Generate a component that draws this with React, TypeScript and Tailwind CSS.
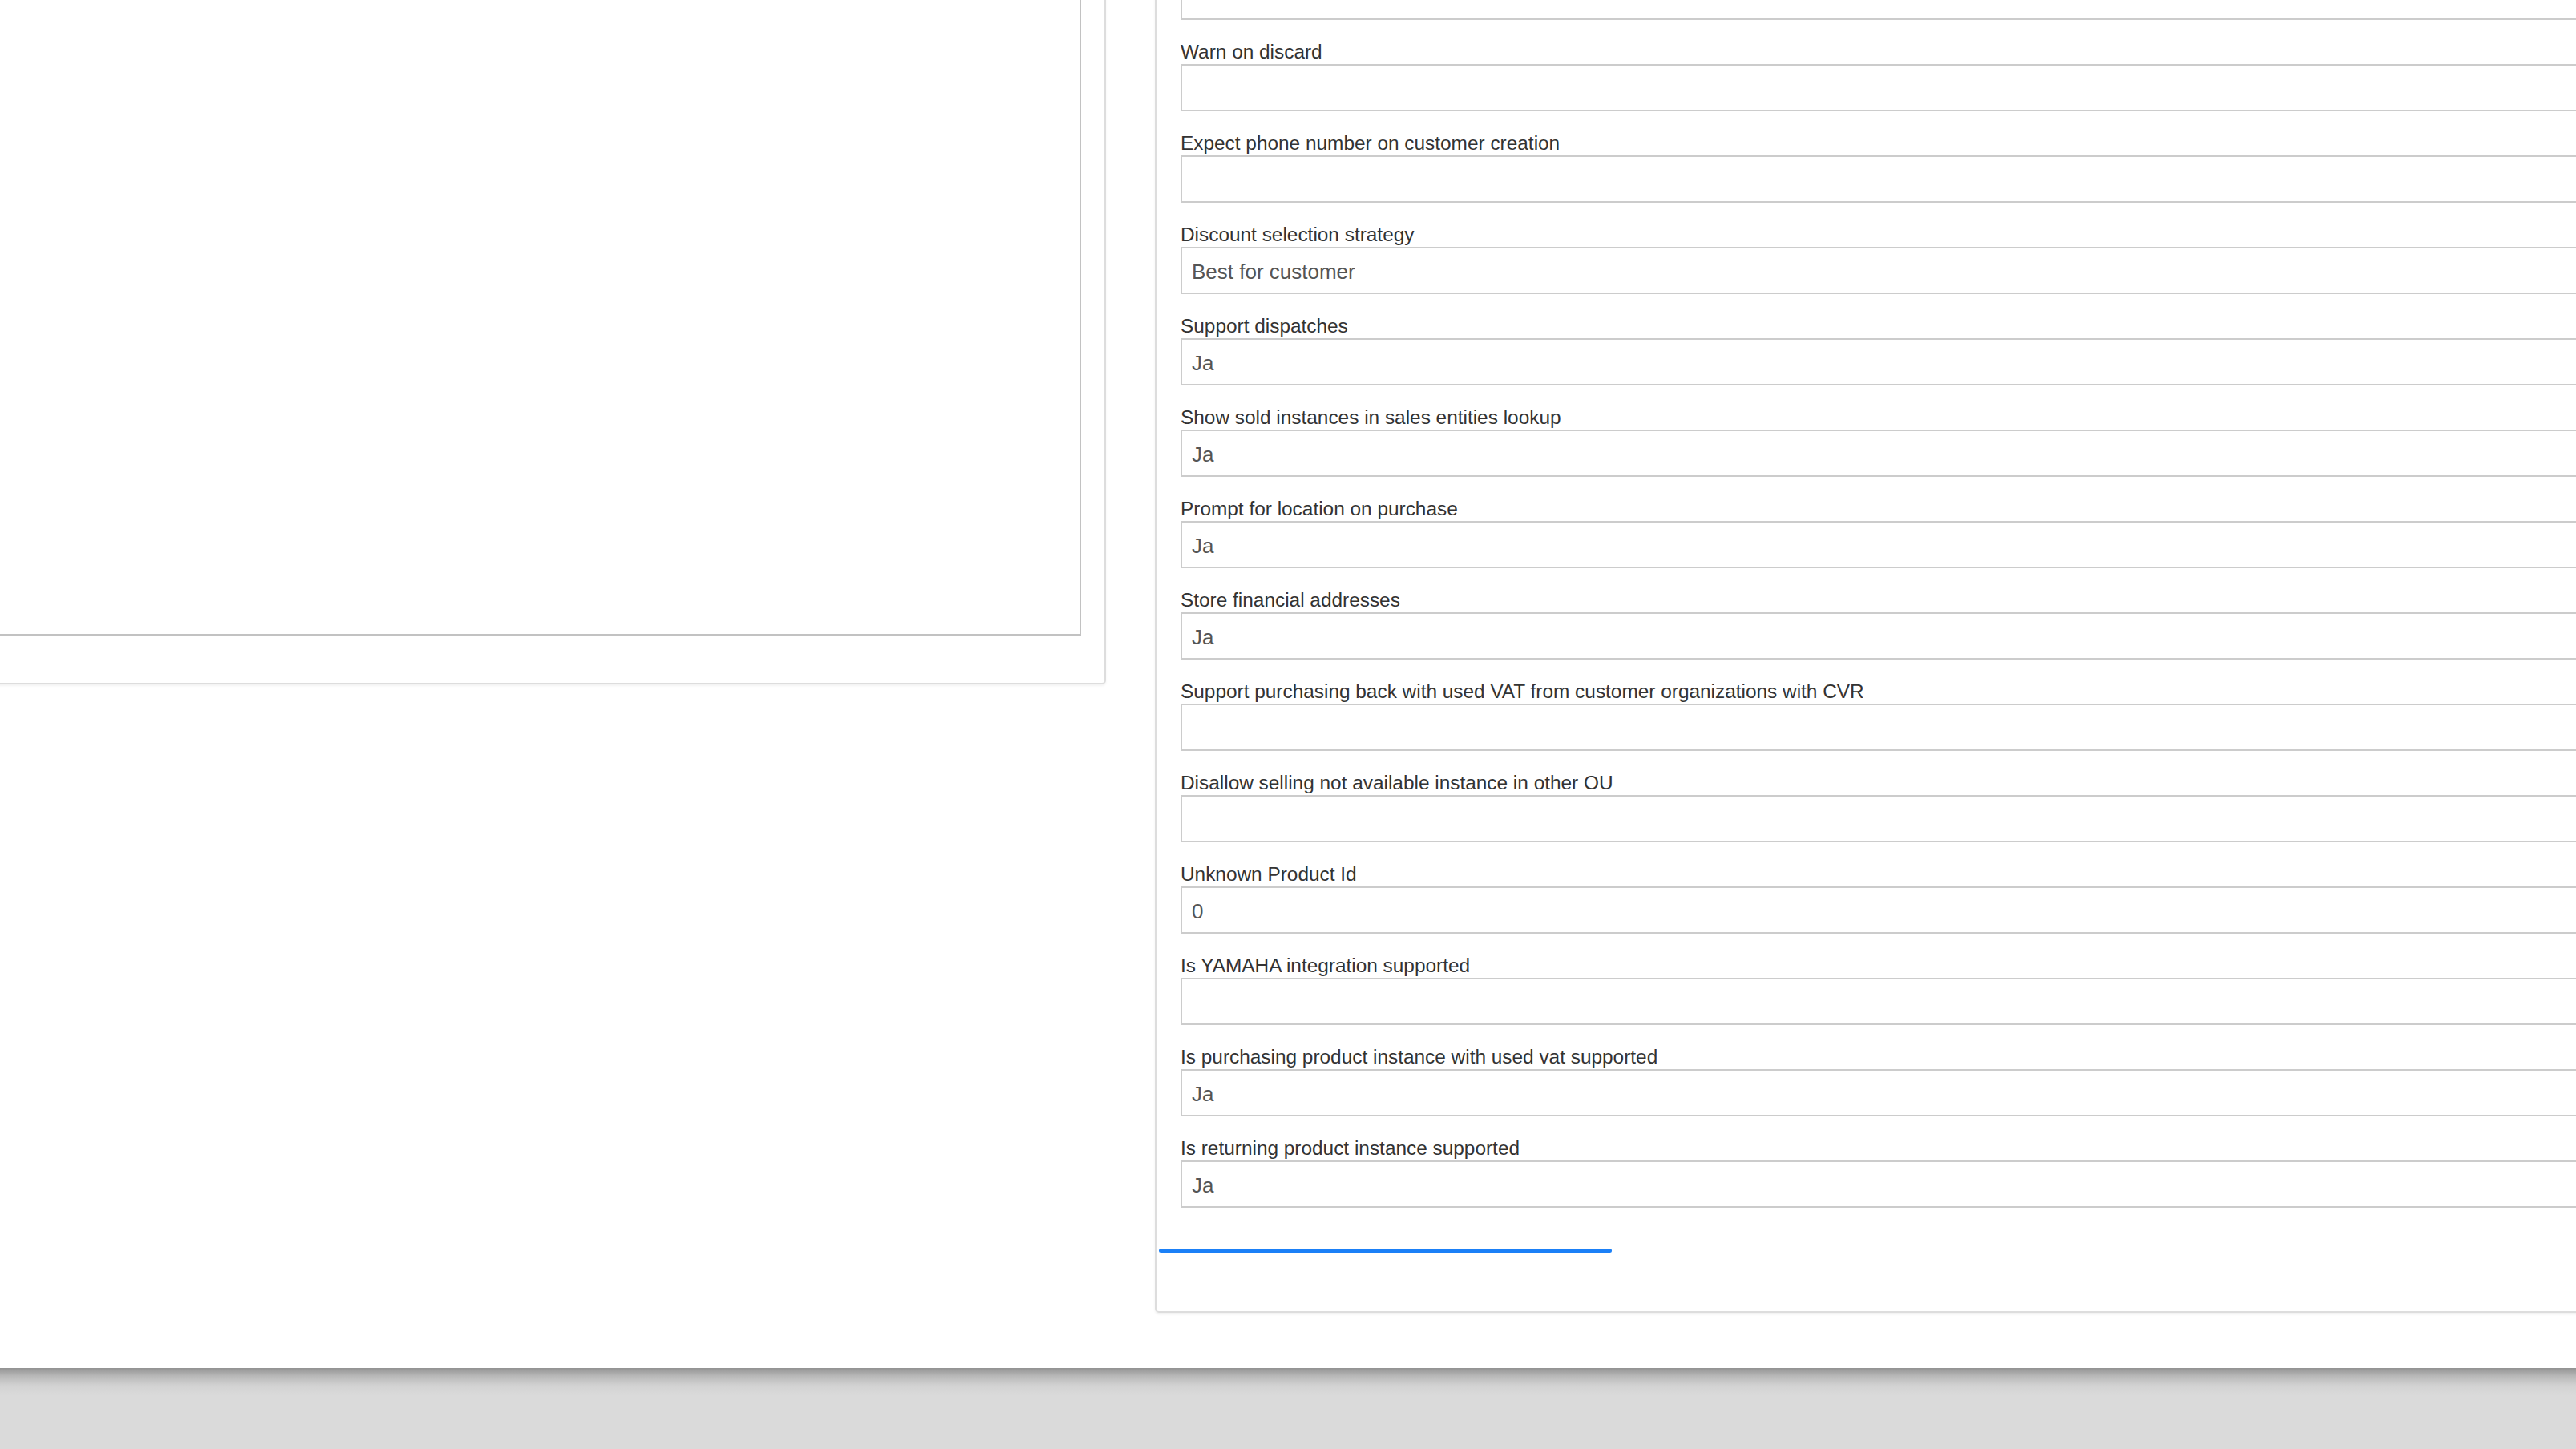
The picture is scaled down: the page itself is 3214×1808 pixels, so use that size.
import React from 'react';

const fields = [
  { label: 'Warn on discard', value: '' },
  { label: 'Expect phone number on customer creation', value: '' },
  { label: 'Discount selection strategy', value: 'Best for customer' },
  { label: 'Support dispatches', value: 'Ja' },
  { label: 'Show sold instances in sales entities lookup', value: 'Ja' },
  { label: 'Prompt for location on purchase', value: 'Ja' },
  { label: 'Store financial addresses', value: 'Ja' },
  { label: 'Support purchasing back with used VAT from customer organizations with CVR', value: '' },
  { label: 'Disallow selling not available instance in other OU', value: '' },
  { label: 'Unknown Product Id', value: '0' },
  { label: 'Is YAMAHA integration supported', value: '' },
  { label: 'Is purchasing product instance with used vat supported', value: 'Ja' },
  { label: 'Is returning product instance supported', value: 'Ja' },
];

const Field: React.FC<{ value: string }> = ({ value }) => (
  <div className="h-[59px] flex items-center border-2 border-[#cccccc] bg-white pl-[12px] pt-[3px] text-[26px] text-[#555555]">
    {value}
  </div>
);

const App: React.FC = () => {
  return (
    <div className="w-[3214px] h-[1808px] overflow-hidden flex flex-col bg-white font-['Liberation_Sans',Arial,sans-serif]">
      <div className="h-[1707px] shrink-0 overflow-hidden">
        <div className="flex items-start gap-[61px] -ml-[20px] -mr-[100px] -mt-[40px]">
          {/* left panel */}
          <div className="w-[1400px] h-[894px] shrink-0 flex flex-col border-2 border-[#dddddd] rounded-[5px] pr-[29px] pb-[59px] shadow-[0_2px_3px_rgba(0,0,0,0.05)]">
            <div className="flex-1 border-2 border-[#c2c2c2] bg-white"></div>
          </div>

          {/* right panel: settings form */}
          <div className="flex-1 border-2 border-[#dddddd] rounded-[5px] pt-[4px] pb-[73px] shadow-[0_2px_3px_rgba(0,0,0,0.06)]">
            <div className="flex flex-col gap-[24px] pl-[30px]">
              <Field value="" />
              {fields.map(f => (
                <div key={f.label} className="flex flex-col">
                  <label className="block leading-[28px] pt-[2px] mb-[1px] text-[24.4px] text-[#333333] whitespace-nowrap">
                    {f.label}
                  </label>
                  <Field value={f.value} />
                </div>
              ))}
            </div>
            <div className="ml-[3px] mt-[51px] w-[565px] h-[5px] rounded-full bg-[#1b80f7]"></div>
          </div>
        </div>
      </div>
      <div className="flex-1 bg-[linear-gradient(to_bottom,#929292_0px,#b8b8b8_10px,#d2d2d2_22px,#dadada_34px)]"></div>
    </div>
  );
};

export default App;
